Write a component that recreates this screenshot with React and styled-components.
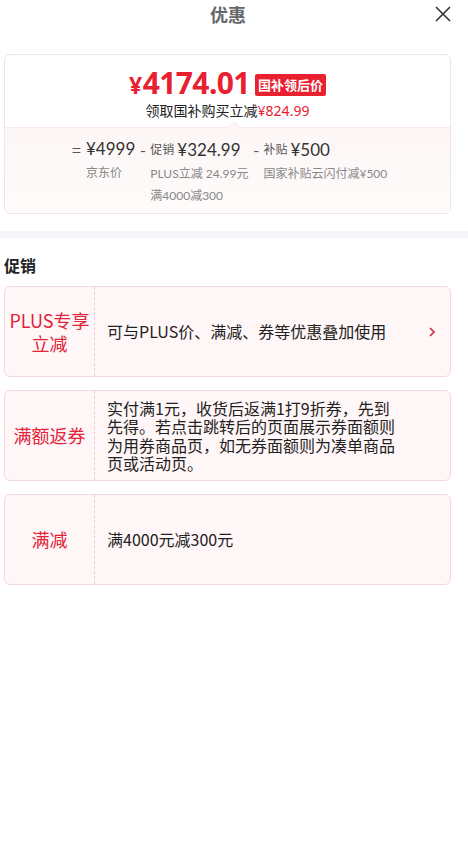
import React from "react";
import styled, { createGlobalStyle } from "styled-components";

const Global = createGlobalStyle`
  body {
    margin: 0;
    background: #ffffff;
    font-family: "Noto Sans CJK SC", "Noto Sans", sans-serif;
    color: #333;
  }
`;

const Page = styled.main`
  width: 468px;
  min-height: 868px;
  background: #fff;
`;

const Header = styled.header`
  height: 28px;
  display: flex;
  align-items: center;
  justify-content: center;
  position: relative;
`;

const Title = styled.h1`
  margin: 0 0 0 -12px;
  font-size: 18px;
  font-weight: 700;
  color: #666;
  line-height: 26px;
`;

const Close = styled.button`
  position: absolute;
  right: 16px;
  top: 5px;
  width: 18px;
  height: 18px;
  padding: 0;
  border: none;
  background: none;
  display: flex;
`;

const Wrap = styled.div`
  padding: 26px 17px 0 4px;
`;

const PriceCard = styled.section`
  border: 1px solid #f2e3e5;
  border-radius: 6px;
  overflow: hidden;
`;

const PriceTop = styled.div`
  height: 72px;
  display: flex;
  flex-direction: column;
  align-items: center;
  padding-top: 13px;
  box-sizing: border-box;
`;

const PriceLine = styled.div`
  display: flex;
  align-items: center;
  gap: 5px;
  height: 32px;
`;

const BigPrice = styled.span`
  color: #e8202f;
  font-family: "Noto Sans", sans-serif;
  font-weight: 700;
  font-size: 30px;
  letter-spacing: -0.6px;
  line-height: 32px;
  small {
    font-size: 23px;
    margin-right: 1px;
  }
`;

const Badge = styled.span`
  background: #e8202f;
  color: #fff;
  font-size: 13px;
  font-weight: 700;
  padding: 0 3px;
  height: 22px;
  line-height: 22px;
  border-radius: 2px;
  margin-top: 2px;
`;

const SubLine = styled.div`
  font-size: 14px;
  color: #222;
  line-height: 18px;
  margin-top: 1px;
  span {
    color: #e8202f;
    font-family: "Noto Sans", sans-serif;
  }
`;

const PriceBottom = styled.div`
  position: relative;
  border-top: 1px solid #fbeaec;
  background: linear-gradient(180deg, #fdf6f6 0%, #fefbfb 100%);
  height: 86px;
  padding: 8px 0 0 67px;
  box-sizing: border-box;
  display: flex;
  &::before {
    content: "";
    position: absolute;
    top: -5px;
    left: 225px;
    width: 8px;
    height: 8px;
    background: #fdf6f6;
    border-left: 1px solid #fbeaec;
    border-top: 1px solid #fbeaec;
    transform: rotate(45deg);
  }
`;

const Op = styled.span`
  font-size: 16px;
  color: #555;
  width: ${(p) => p.w}px;
  padding-left: ${(p) => p.pl || 0}px;
  line-height: 26px;
  flex-shrink: 0;
`;

const Term = styled.div`
  display: flex;
  flex-direction: column;
  margin-right: ${(p) => p.mr || 0}px;
`;

const TermValue = styled.div`
  font-family: "Lato", "Noto Sans CJK SC", sans-serif;
  font-size: 17px;
  color: #333;
  line-height: 26px;
  white-space: nowrap;
  em {
    font-style: normal;
    font-family: "Noto Sans CJK SC", sans-serif;
    font-size: 12px;
    color: #555;
    margin-right: 3px;
    vertical-align: 2px;
  }
`;

const TermNote = styled.div`
  font-family: "Lato", "Noto Sans CJK SC", sans-serif;
  font-size: 12px;
  color: #888;
  line-height: 22px;
  white-space: nowrap;
`;

const Band = styled.div`
  height: 7px;
  background: #f4f5f8;
  margin-top: 17px;
`;

const Section = styled.div`
  padding: 16px 17px 0 4px;
`;

const SectionTitle = styled.h2`
  margin: 0 0 10px;
  font-size: 16px;
  font-weight: 700;
  color: #222;
  line-height: 22px;
`;

const List = styled.div`
  display: flex;
  flex-direction: column;
  gap: 13px;
`;

const Promo = styled.div`
  display: flex;
  height: 91px;
  background: #fff6f7;
  border: 1px solid #f3d9de;
  border-radius: 6px;
  box-sizing: border-box;
`;

const PromoTag = styled.div`
  width: 90px;
  flex-shrink: 0;
  border-right: 1px dashed #efcbd2;
  display: flex;
  align-items: center;
  justify-content: center;
  text-align: center;
  color: #e2233a;
  font-size: 18px;
  line-height: 23px;
  padding: 0 4px;
  box-sizing: border-box;
`;

const PromoBody = styled.div`
  flex: 1;
  display: flex;
  align-items: center;
  padding: 0 13px 0 12px;
`;

const PromoText = styled.div`
  font-size: 16px;
  color: #222;
  line-height: 18.5px;
  max-width: 292px;
`;

const Chevron = styled.svg`
  width: 10px;
  height: 12px;
  flex-shrink: 0;
  margin-left: auto;
`;

const promos = [
  { tag: "PLUS专享立减", text: "可与PLUS价、满减、券等优惠叠加使用", arrow: true },
  {
    tag: "满额返券",
    text: "实付满1元，收货后返满1打9折券，先到先得。若点击跳转后的页面展示券面额则为用券商品页，如无券面额则为凑单商品页或活动页。",
  },
  { tag: "满减", text: "满4000元减300元" },
];

export default function App() {
  return (
    <Page>
      <Global />
      <Header>
        <Title>优惠</Title>
        <Close aria-label="关闭">
          <svg width="18" height="18" viewBox="0 0 18 18">
            <path d="M2 2 L16 16 M16 2 L2 16" stroke="#333" strokeWidth="1.6" fill="none" />
          </svg>
        </Close>
      </Header>
      <Wrap>
        <PriceCard>
          <PriceTop>
            <PriceLine>
              <BigPrice>
                <small>¥</small>4174.01
              </BigPrice>
              <Badge>国补领后价</Badge>
            </PriceLine>
            <SubLine>
              领取国补购买立减<span>¥824.99</span>
            </SubLine>
          </PriceTop>
          <PriceBottom>
            <Op w={14}>=</Op>
            <Term>
              <TermValue>¥4999</TermValue>
              <TermNote>京东价</TermNote>
            </Term>
            <Op w={10} pl={5}>-</Op>
            <Term mr={5}>
              <TermValue>
                <em>促销</em>¥324.99
              </TermValue>
              <TermNote>PLUS立减 24.99元</TermNote>
              <TermNote>满4000减300</TermNote>
            </Term>
            <Op w={10}>-</Op>
            <Term>
              <TermValue>
                <em>补贴</em>¥500
              </TermValue>
              <TermNote>国家补贴云闪付减¥500</TermNote>
            </Term>
          </PriceBottom>
        </PriceCard>
      </Wrap>
      <Band />
      <Section>
        <SectionTitle>促销</SectionTitle>
        <List>
          {promos.map((p) => (
            <Promo key={p.tag}>
              <PromoTag>{p.tag}</PromoTag>
              <PromoBody>
                <PromoText>{p.text}</PromoText>
                {p.arrow && (
                  <Chevron viewBox="0 0 10 12">
                    <path d="M3 2 L7 6 L3 10" stroke="#c8283c" strokeWidth="1.6" fill="none" />
                  </Chevron>
                )}
              </PromoBody>
            </Promo>
          ))}
        </List>
      </Section>
    </Page>
  );
}
